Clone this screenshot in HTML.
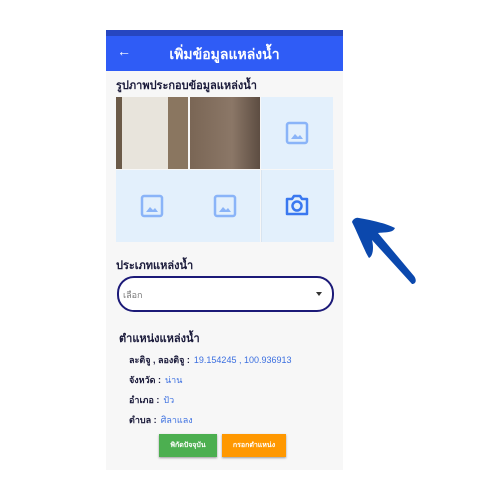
<!DOCTYPE html>
<html><head><meta charset="utf-8"><style>
body{margin:0;width:500px;height:500px;background:#fff;position:relative;font-family:"Liberation Sans","Noto Sans CJK SC",sans-serif;overflow:hidden}
.ph{position:absolute;left:106px;top:30px;width:237px;height:440px;background:#f7f7f7}
.a{position:absolute}
.cell{position:absolute;background:#e3f0fc}
.lbl{position:absolute;left:23px;font-size:9px;font-weight:bold;color:#1a1a3a}
.val{color:#3b6fe0;font-weight:normal;margin-left:4px}
</style></head><body>
<div class="ph">
<div class="a" style="left:0;top:0;width:237px;height:6px;background:#2646c0"></div>
<div class="a" style="left:0;top:6px;width:237px;height:35px;background:#2f5cf6"></div>
<div class="a" style="left:11px;top:13px;color:#fff;font-size:14px">←</div>
<div class="a" style="left:0;width:237px;top:14px;text-align:center;color:#fff;font-size:14px;font-weight:bold">เพิ่มข้อมูลแหล่งน้ำ</div>
<div class="a" style="left:10px;top:46px;font-size:11px;font-weight:bold;color:#1a1a3a">รูปภาพประกอบข้อมูลแหล่งน้ำ</div>
<div class="cell" style="left:10px;top:67px;width:72px;height:72px;background:linear-gradient(90deg,#6b5a48 0 8%,#e8e4dc 8% 72%,#8a7660 72%);"></div>
<div class="cell" style="left:84px;top:67px;width:70px;height:72px;background:linear-gradient(90deg,#7a6655,#8b7767 60%,#5d4d42)"></div>
<div class="cell" style="left:155px;top:67px;width:72px;height:72px"></div>
<div class="cell" style="left:10px;top:140px;width:144px;height:72px"></div>
<div class="cell" style="left:155px;top:140px;width:72px;height:72px;border-left:1px solid #d8e4f0"></div>
<svg class="a" style="left:179px;top:91px" width="24" height="24" viewBox="0 0 24 24"><rect x="2" y="2" width="20" height="20" rx="2" fill="none" stroke="#8ab4f8" stroke-width="2.5"/><path d="M6 18l4-5 3 3 2-2 3 4z" fill="#8ab4f8"/></svg>
<svg class="a" style="left:34px;top:164px" width="24" height="24" viewBox="0 0 24 24"><rect x="2" y="2" width="20" height="20" rx="2" fill="none" stroke="#8ab4f8" stroke-width="2.5"/><path d="M6 18l4-5 3 3 2-2 3 4z" fill="#8ab4f8"/></svg>
<svg class="a" style="left:107px;top:164px" width="24" height="24" viewBox="0 0 24 24"><rect x="2" y="2" width="20" height="20" rx="2" fill="none" stroke="#8ab4f8" stroke-width="2.5"/><path d="M6 18l4-5 3 3 2-2 3 4z" fill="#8ab4f8"/></svg>
<svg class="a" style="left:178px;top:163px" width="26" height="24" viewBox="0 0 26 24"><path d="M3 6h5l2-3h6l2 3h5v15H3z" fill="none" stroke="#3a78f0" stroke-width="2.5" stroke-linejoin="round"/><circle cx="13" cy="13" r="4.5" fill="none" stroke="#3a78f0" stroke-width="2.5"/></svg>
<div class="a" style="left:10px;top:226px;font-size:11px;font-weight:bold;color:#1a1a3a">ประเภทแหล่งน้ำ</div>
<div class="a" style="left:11px;top:246px;width:213px;height:32px;border:2px solid #1c1a78;border-radius:17px;background:#fff"></div>
<div class="a" style="left:17px;top:258px;font-size:9px;color:#777">เลือก</div>
<div class="a" style="left:210px;top:262px;width:0;height:0;border-left:3px solid transparent;border-right:3px solid transparent;border-top:4px solid #333"></div>
<div class="a" style="left:13px;top:299px;font-size:11px;font-weight:bold;color:#1a1a3a">ตำแหน่งแหล่งน้ำ</div>
<div class="lbl" style="top:323px">ละติจู , ลองติจู :<span class="val">19.154245 , 100.936913</span></div>
<div class="lbl" style="top:343px">จังหวัด :<span class="val">น่าน</span></div>
<div class="lbl" style="top:363px">อำเภอ :<span class="val">ปัว</span></div>
<div class="lbl" style="top:383px">ตำบล :<span class="val">ศิลาแลง</span></div>
<div class="a" style="left:53px;top:404px;width:58px;height:23px;background:#4caf50;color:#fff;font-size:7px;font-weight:bold;text-align:center;line-height:23px;box-shadow:0 1px 2px #999">พิกัดปัจจุบัน</div>
<div class="a" style="left:116px;top:404px;width:64px;height:23px;background:#ff9800;color:#fff;font-size:7px;font-weight:bold;text-align:center;line-height:23px;box-shadow:0 1px 2px #999">กรอกตำแหน่ง</div>
</div>
<svg class="a" style="left:0;top:0" width="500" height="500"><path d="M352 222 C353 219 356 217 359 218 C370 220 382 222 395 228 C393 233 386 232 378 233 L414 276 C417 280 416 284 412 284 L372 240 C374 248 373 256 369 258 C366 254 358 234 352 222 Z" fill="#0b48ad"/></svg>
</body></html>
